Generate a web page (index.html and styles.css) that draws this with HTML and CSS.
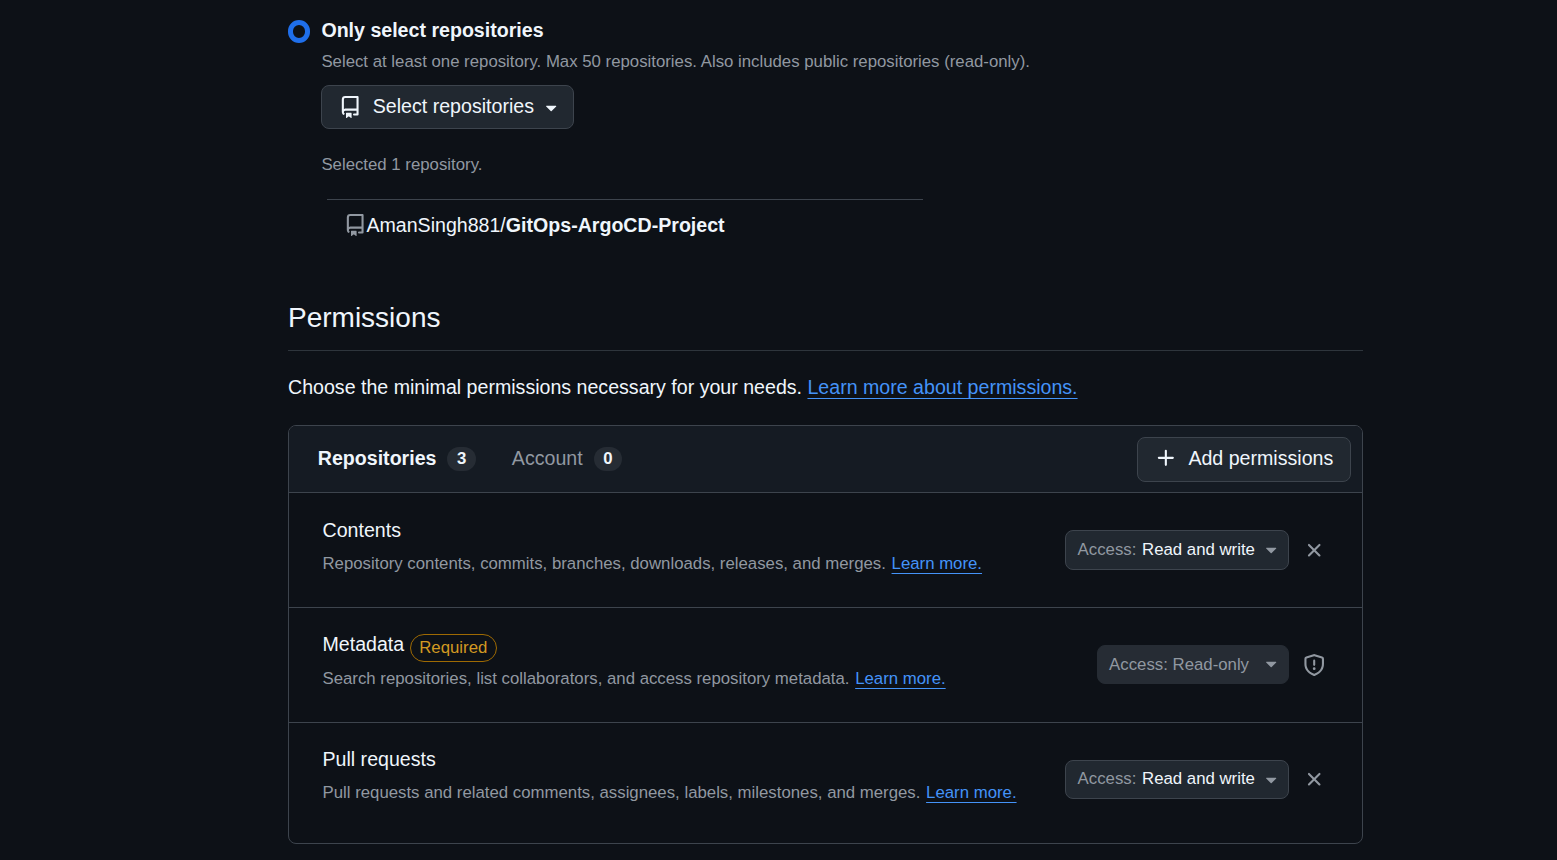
FILE: index.html
```html
<!DOCTYPE html>
<html lang="en">
<head>
<meta charset="utf-8">
<title>Permissions</title>
<link rel="stylesheet" href="styles.css">
</head>
<body>
<svg class="sprite" aria-hidden="true">
  <symbol id="repo" viewBox="0 0 16 16"><path d="M2 2.5A2.5 2.5 0 0 1 4.5 0h8.75a.75.75 0 0 1 .75.75v12.5a.75.75 0 0 1-.75.75h-2.5a.75.75 0 0 1 0-1.5h1.75v-2h-8a1 1 0 0 0-.714 1.7.75.75 0 1 1-1.072 1.05A2.495 2.495 0 0 1 2 11.5Zm10.5-1h-8a1 1 0 0 0-1 1v6.708A2.486 2.486 0 0 1 4.5 9h8ZM5 12.25a.25.25 0 0 1 .25-.25h3.5a.25.25 0 0 1 .25.25v3.25a.25.25 0 0 1-.4.2l-1.45-1.087a.249.249 0 0 0-.3 0L5.4 15.7a.25.25 0 0 1-.4-.2Z"/></symbol>
  <symbol id="caret" viewBox="0 0 16 16"><path d="m4.427 7.427 3.396 3.396a.25.25 0 0 0 .354 0l3.396-3.396A.25.25 0 0 0 11.396 7H4.604a.25.25 0 0 0-.177.427Z"/></symbol>
  <symbol id="plus" viewBox="0 0 16 16"><path d="M7.75 2a.75.75 0 0 1 .75.75V7h4.25a.75.75 0 0 1 0 1.5H8.5v4.25a.75.75 0 0 1-1.5 0V8.5H2.75a.75.75 0 0 1 0-1.5H7V2.75A.75.75 0 0 1 7.75 2Z"/></symbol>
  <symbol id="x" viewBox="0 0 16 16"><path d="M3.72 3.72a.75.75 0 0 1 1.06 0L8 6.94l3.22-3.22a.749.749 0 0 1 1.275.326.749.749 0 0 1-.215.734L9.06 8l3.22 3.22a.749.749 0 0 1-.326 1.275.749.749 0 0 1-.734-.215L8 9.06l-3.22 3.22a.751.751 0 0 1-1.042-.018.751.751 0 0 1-.018-1.042L6.94 8 3.72 4.78a.75.75 0 0 1 0-1.06Z"/></symbol>
  <symbol id="shield" viewBox="0 0 16 16"><path d="M7.467.133a1.748 1.748 0 0 1 1.066 0l5.25 1.68A1.75 1.75 0 0 1 15 3.48V7c0 1.566-.32 3.182-1.303 4.682-.983 1.498-2.585 2.813-5.032 3.855a1.697 1.697 0 0 1-1.33 0c-2.447-1.042-4.049-2.357-5.032-3.855C1.32 10.182 1 8.566 1 7V3.48a1.755 1.755 0 0 1 1.217-1.667Zm.61 1.429a.25.25 0 0 0-.153 0l-5.25 1.68a.25.25 0 0 0-.174.238V7c0 1.358.275 2.666 1.057 3.86.784 1.194 2.121 2.34 4.366 3.297a.196.196 0 0 0 .154 0c2.245-.956 3.582-2.104 4.366-3.298C13.225 9.666 13.5 8.36 13.5 7V3.48a.251.251 0 0 0-.174-.237l-5.25-1.68ZM8.75 4.75v3a.75.75 0 0 1-1.5 0v-3a.75.75 0 0 1 1.5 0ZM9 10.5a1 1 0 1 1-2 0 1 1 0 0 1 2 0Z"/></symbol>
</svg>
<main class="page">
  <section class="choice">
    <span class="radio" role="radio" aria-checked="true"></span>
    <div class="choice-body">
      <div class="choice-title">Only select repositories</div>
      <p class="note">Select at least one repository. Max 50 repositories. Also includes public repositories (read-only).</p>
      <button class="btn btn-select"><svg class="icon"><use href="#repo"/></svg><span>Select repositories</span><svg class="icon caret"><use href="#caret"/></svg></button>
      <p class="note selected">Selected 1 repository.</p>
      <div class="repo-list">
        <svg class="icon muted"><use href="#repo"/></svg><span>AmanSingh881/<b>GitOps-ArgoCD-Project</b></span>
      </div>
    </div>
  </section>

  <h2 class="heading">Permissions</h2>
  <p class="intro">Choose the minimal permissions necessary for your needs. <a class="link" href="#">Learn more about permissions.</a></p>

  <section class="box">
    <header class="box-header">
      <nav class="tabs">
        <span class="tab active"><span class="tab-name">Repositories</span><span class="counter">3</span></span>
        <span class="tab"><span class="tab-name">Account</span><span class="counter">0</span></span>
      </nav>
      <button class="btn btn-add"><svg class="icon"><use href="#plus"/></svg><span>Add permissions</span></button>
    </header>
    <div class="row">
      <div class="row-text">
        <div class="row-title">Contents</div>
        <p class="note">Repository contents, commits, branches, downloads, releases, and merges. <a class="link" href="#">Learn more.</a></p>
      </div>
      <button class="access"><span>Access: <em>Read and write</em></span><svg class="icon"><use href="#caret"/></svg></button>
      <svg class="icon muted"><use href="#x"/></svg>
    </div>
    <div class="row row-required">
      <div class="row-text">
        <div class="row-title"><span>Metadata</span><span class="label">Required</span></div>
        <p class="note">Search repositories, list collaborators, and access repository metadata. <a class="link" href="#">Learn more.</a></p>
      </div>
      <button class="access locked"><span>Access: Read-only</span><svg class="icon"><use href="#caret"/></svg></button>
      <svg class="icon muted"><use href="#shield"/></svg>
    </div>
    <div class="row row-last">
      <div class="row-text">
        <div class="row-title">Pull requests</div>
        <p class="note">Pull requests and related comments, assignees, labels, milestones, and merges. <a class="link" href="#">Learn more.</a></p>
      </div>
      <button class="access"><span>Access: <em>Read and write</em></span><svg class="icon"><use href="#caret"/></svg></button>
      <svg class="icon muted"><use href="#x"/></svg>
    </div>
  </section>
</main>
</body>
</html>
```
FILE: styles.css
```css
* { box-sizing: border-box; }
html, body { height: 860px; overflow: hidden; }
body {
  margin: 0;
  background: #0d1117;
  color: #f0f6fc;
  font: 19.6px/30px "Liberation Sans", Arial, sans-serif;
}
p, h2 { margin: 0; }
button { font: inherit; color: inherit; margin: 0; }
.sprite { display: none; }
.page { width: 1075px; margin-left: 288px; padding-top: 15px; }
.icon { width: 22.4px; height: 22.4px; flex: none; fill: currentColor; display: block; }
.muted, .note { color: #9198a1; }
.note { font-size: 16.8px; line-height: 26px; white-space: nowrap; }
.link { color: #4493f8; text-decoration: underline; text-decoration-thickness: 1px; text-underline-offset: 4px; }
.note .link { margin-left: 1px; }

.choice { display: flex; height: 285px; }
.radio { width: 22.4px; height: 22.4px; margin-top: 5.4px; border: 5.6px solid #1f6feb; border-radius: 50%; flex: none; }
.choice-body { margin-left: 11px; }
.choice-title { font-weight: 700; }
.choice-body > .note { margin-top: 4px; }
.btn {
  display: flex; align-items: center;
  border: 1px solid #3d444d; border-radius: 8px;
  background: #212830; white-space: nowrap;
}
.btn span { margin-bottom: 2px; }
.btn-select { width: 253px; height: 44px; margin-top: 10px; padding: 0 0 0 17px; }
.btn-select span { margin-left: 11px; margin-right: 6px; }
.choice-body > .selected { margin-top: 23px; }
.repo-list {
  display: flex; align-items: center;
  width: 596px; height: 52px; margin: 21px 0 0 5.6px; padding-left: 17px;
  border-top: 1px solid #3d444d;
}
.repo-list span { margin-bottom: 2px; }

.heading { height: 51px; border-bottom: 1px solid #3d444db3; font-size: 28px; font-weight: 400; line-height: 36px; }
.intro { margin-top: 21px; height: 53px; }

.box { height: 419px; border: 1px solid #3d444d; border-radius: 8px; overflow: hidden; }
.box-header {
  display: flex; justify-content: space-between; align-items: center;
  height: 67px; padding: 0 11px 0 28.8px;
  background: #151b23; border-bottom: 1px solid #3d444d;
}
.tabs { display: flex; gap: 36px; }
.tab { display: flex; align-items: center; color: #9198a1; }
.tab-name { margin-bottom: 2px; }
.tab.active { color: #f0f6fc; font-weight: 700; }
.counter {
  min-width: 28px; height: 24px; margin-left: 11px; padding: 0 9.5px;
  border-radius: 12px; background: #262c34; color: #f0f6fc;
  font-size: 16.8px; font-weight: 700; line-height: 23px; text-align: center;
}
.btn-add { width: 214px; height: 45px; padding: 0 0 1px 17px; }
.btn-add span { margin-left: 11px; }

.row { display: flex; align-items: center; height: 115px; padding: 0 37px 0 33.5px; border-bottom: 1px solid #3d444d; }
.row-text { flex: 1; height: 70px; }
.row-title { display: flex; height: 30px; }
.row-title + .note { margin-top: 6px; }
.row-required .row-title > :first-child { margin-top: -1px; }
.row-last { height: 113px; border: 0; }
.row-last .row-text { height: 71px; }
.label {
  height: 28px; margin: 4px 0 0 6px; padding: 0 8.5px 0 8px;
  border: 1px solid #9e6a03; border-radius: 14px;
  color: #d29922; font-size: 16.8px; line-height: 26px;
}
.access {
  display: flex; align-items: center; justify-content: space-between;
  width: 224px; height: 40px; margin-right: 14px; padding: 0 5px 1px 12px;
  border: 1px solid #3d444d; border-radius: 8px;
  background: #212830; color: #9198a1; font-size: 16.8px; white-space: nowrap;
}
.access em { margin-left: 1px; color: #f0f6fc; font-style: normal; }
.row-last .access { height: 39px; }
.locked { width: 192px; height: 39px; margin-bottom: 1px; padding: 0 5px 0 11.5px; border-color: #262c34; background: #262c34; }
.locked .icon { margin-bottom: 3px; }
```
